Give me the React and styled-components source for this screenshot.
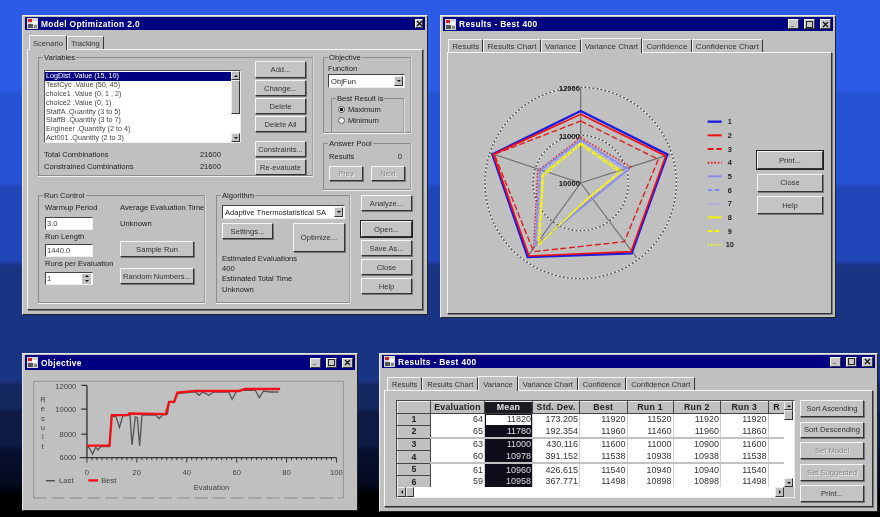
import styled, { createGlobalStyle } from "styled-components";

const GlobalStyle = createGlobalStyle`
  html, body { margin: 0; padding: 0; background: #000; }
  body { font-family: "Liberation Sans", Arial, sans-serif; font-size: 7.6px; color: #1c1c1c; }
`;

const Desktop = styled.div`
  position: relative;
  width: 880px;
  height: 517px;
  overflow: hidden;
  filter: blur(0.55px);
  background: linear-gradient(
    #2c5be6 0, #2c5be6 90px,
    #2652d6 94px, #2652d6 183px,
    #2146ba 187px, #2146ba 260px,
    #1a3484 266px, #1a3484 380px,
    #14275f 386px, #14275f 408px,
    #0d1b45 412px, #0d1b45 445px,
    #071030 450px, #050a20 485px,
    #000 495px
  );
`;

const Win = styled.div`
  position: absolute;
  left: ${(p) => p.$x}px;
  top: ${(p) => p.$y}px;
  width: ${(p) => p.$w}px;
  height: ${(p) => p.$h}px;
  box-sizing: border-box;
  padding: 1px 2px 2px;
  background: #c0c0c0;
  border: 1px solid;
  border-color: #e8e8e8 #222 #222 #e8e8e8;
  display: flex;
  flex-direction: column;
`;

const TitleBar = styled.div`
  height: ${(p) => p.$h || 13}px;
  flex: none;
  background: #000080;
  color: #fff;
  font-weight: 700;
  font-size: 8.4px;
  letter-spacing: 0.35px;
  display: flex;
  align-items: center;
  gap: 3px;
  padding: 0 2px;
`;

const TitleText = styled.span`
  flex: 1;
`;

const WinBtn = styled.span`
  width: ${(p) => (p.$small ? 8 : 11)}px;
  height: ${(p) => (p.$small ? 9 : 10)}px;
  margin-left: ${(p) => (p.$gap ? 2 : -3)}px;
  background: #c8c8c8;
  border: 1px solid;
  border-color: #fff #333 #333 #fff;
  box-sizing: border-box;
  display: grid;
  place-items: center;
  color: #111;
`;

const AppIcon = () => (
  <svg width="11" height="11" viewBox="0 0 11 11">
    <rect width="11" height="11" fill="#d8d8d8" />
    <rect x="1" y="1" width="4" height="3" fill="#c22" />
    <rect x="5" y="3" width="5" height="3" fill="#fff" />
    <rect x="1" y="6" width="5" height="4" fill="#555" />
    <rect x="7" y="7" width="3" height="3" fill="#888" />
  </svg>
);

const Controls = ({ full }) => (
  <>
    {full && (
      <>
        <WinBtn>
          <svg width="7" height="7" viewBox="0 0 7 7"><rect x="1" y="5" width="3" height="1" fill="#777" /></svg>
        </WinBtn>
        <WinBtn $gap>
          <svg width="7" height="7" viewBox="0 0 7 7"><rect x="0.5" y="0.5" width="6" height="6" fill="none" stroke="#222" /></svg>
        </WinBtn>
      </>
    )}
    <WinBtn $gap $small={!full}>
      <svg width="7" height="7" viewBox="0 0 7 7"><path d="M1 1l5 5M6 1l-5 5" stroke="#111" strokeWidth="1.3" /></svg>
    </WinBtn>
  </>
);

const TabRow = styled.div`
  display: flex;
  flex: none;
  height: ${(p) => p.$h || 17}px;
  align-items: flex-end;
  padding-left: ${(p) => p.$pad || 3}px;
  margin-top: ${(p) => p.$top || 2}px;
  position: relative;
  z-index: 1;
`;

const Tab = styled.div`
  box-sizing: border-box;
  height: ${(p) => (p.$on ? 15 : 13)}px;
  padding: 0 ${(p) => p.$pad || 3}px;
  display: flex;
  align-items: center;
  background: #c0c0c0;
  color: #333;
  font-size: ${(p) => p.$size || 7.6}px;
  border-top: 1px solid #f4f4f4;
  border-left: 1px solid #f4f4f4;
  border-right: 1px solid #333;
  margin-bottom: ${(p) => (p.$on ? -1 : 0)}px;
`;

const TabPanel = styled.div`
  flex: 1;
  min-height: 0;
  box-sizing: border-box;
  border: 1px solid;
  border-color: #f4f4f4 #333 #333 #f4f4f4;
  box-shadow: 1px 1px 0 #777;
  margin: 0 2px 2px;
`;

const ScenarioPanel = styled(TabPanel)`
  padding: 7px 10px 6px 10px;
  display: flex;
  flex-direction: column;
  gap: 4px;
`;

const TopRow = styled.div`
  display: grid;
  grid-template-columns: 275px 88px;
  gap: 10px;
  height: 134px;
`;

const BottomRow = styled.div`
  flex: 1;
  display: grid;
  grid-template-columns: 167px 134px 51px;
  gap: 11px;
  height: 108px;
`;

const Group = styled.div`
  position: relative;
  box-sizing: border-box;
  border: 1px solid #8c8c8c;
  border-right-color: #a0a0a0;
  box-shadow: 0 1px 0 #f2f2f2, 1px 0 0 #dcdcdc;
  padding: ${(p) => p.$pad || "0"};
  height: ${(p) => (p.$h ? `${p.$h}px` : "auto")};
`;

const BestGroup = styled(Group)`
  margin: 10px 0 0 3px;
  width: 73px;
  height: 35px;
`;

const GroupTitle = styled.span`
  position: absolute;
  top: -5px;
  left: 4px;
  padding: 0 1px;
  background: #c0c0c0;
  line-height: 9px;
  white-space: pre-line;
`;

const VarGrid = styled.div`
  display: grid;
  grid-template-columns: 197px 51px;
  gap: 14px;
`;

const VarLeft = styled.div`
  display: flex;
  flex-direction: column;
`;

const Stack = styled.div`
  display: flex;
  flex-direction: column;
  gap: ${(p) => p.$gap ?? 2}px;
  margin-top: ${(p) => p.$top || 0}px;
`;

const Btn = styled.button`
  box-sizing: border-box;
  flex: none;
  width: ${(p) => (p.$w ? `${p.$w}px` : "100%")};
  height: ${(p) => p.$h || 16}px;
  margin-top: ${(p) => p.$mt || 0}px;
  margin-bottom: ${(p) => p.$mb || 0}px;
  padding: 0;
  font: inherit;
  font-size: ${(p) => p.$size || 7.6}px;
  color: ${(p) => (p.$off ? "#8a8a8a" : "#333")};
  text-shadow: ${(p) => (p.$off ? "1px 1px 0 #eee" : "none")};
  background: #c4c4c4;
  border: 1px solid;
  border-color: #f6f6f6 #333 #333 #f6f6f6;
  box-shadow: ${(p) => (p.$def ? "0 0 0 1px #222" : "1px 1px 0 #777")};
`;

const ListFrame = styled.div`
  display: flex;
  height: 73px;
  background: #fff;
  border: 1px solid;
  border-color: #555 #eee #eee #555;
  box-sizing: border-box;
`;

const ListBody = styled.div`
  flex: 1;
  padding-top: 1px;
  font-size: 7.2px;
  color: #444;
`;

const ListRow = styled.div`
  height: 8.9px;
  line-height: 8.9px;
  padding-left: 1px;
  background: ${(p) => (p.$on ? "#000080" : "transparent")};
  color: ${(p) => (p.$on ? "#fff" : "inherit")};
`;

const ScrollBar = styled.div`
  display: flex;
  flex: none;
  flex-direction: ${(p) => (p.$h ? "row" : "column")};
  ${(p) => (p.$h ? "height: 10px;" : "width: 9px;")}
  background: #fff;
`;

const ScrollBtn = styled.div`
  box-sizing: border-box;
  flex: none;
  ${(p) => (p.$h ? "width: 9px;" : "height: 9px;")}
  background: #c0c0c0;
  border: 1px solid;
  border-color: #eee #333 #333 #eee;
  display: grid;
  place-items: center;
`;

const Thumb = styled(ScrollBtn)`
  ${(p) => (p.$h ? `width: ${p.$size}px;` : `height: ${p.$size}px;`)}
`;

const ScrollGap = styled.div`
  flex: 1;
`;

const Arrow = styled.span`
  width: 0;
  height: 0;
  border: 2.5px solid transparent;
  ${(p) => `border-${p.$side}: none; border-${{ top: "bottom", bottom: "top", left: "right", right: "left" }[p.$side]}-color: #111;`}
`;

const StatRow = styled.div`
  display: flex;
  justify-content: space-between;
  padding-right: 20px;
  height: 12px;
  align-items: center;
  margin-top: ${(p) => p.$top || 0}px;
`;

const Combo = styled.div`
  box-sizing: border-box;
  display: flex;
  align-items: center;
  justify-content: space-between;
  height: ${(p) => p.$h || 14}px;
  background: #fff;
  border: 1px solid;
  border-color: #444 #eee #eee #444;
  padding: 0 1px 0 2px;
`;

const ComboBtn = styled.span`
  box-sizing: border-box;
  width: 9px;
  height: 10px;
  background: #c0c0c0;
  border: 1px solid;
  border-color: #eee #333 #333 #eee;
  display: grid;
  place-items: center;
`;

const ObjectiveLabel = styled.div`
  line-height: 10px;
  padding-top: 4px;
`;

const RadioRow = styled.label`
  display: flex;
  align-items: center;
  gap: 3px;
  height: 11px;
`;

const RadioDot = styled.span`
  box-sizing: border-box;
  width: 7px;
  height: 7px;
  border-radius: 50%;
  background: ${(p) => (p.$on ? "radial-gradient(circle, #111 0 1.5px, #fff 2px)" : "#fff")};
  border: 1px solid #555;
`;

const RightCol = styled.div`
  display: flex;
  flex-direction: column;
  gap: 10px;
`;

const AnswerRow = styled.div`
  display: flex;
  justify-content: space-between;
  padding-right: 3px;
`;

const ButtonPair = styled.div`
  display: flex;
  justify-content: space-between;
  margin-top: 5px;
`;

const RunGrid = styled.div`
  display: grid;
  grid-template-columns: 75px 78px;
`;

const FieldLabel = styled.div`
  line-height: 10px;
  margin-top: ${(p) => p.$top || 0}px;
  white-space: nowrap;
`;

const Input = styled.div`
  box-sizing: border-box;
  width: 48px;
  height: 13px;
  margin-top: ${(p) => p.$top || 0}px;
  padding: 0 1px;
  display: flex;
  align-items: center;
  justify-content: space-between;
  background: #fff;
  border: 1px solid;
  border-color: #444 #eee #eee #444;
  color: #444;
`;

const Spinner = styled.span`
  display: flex;
  flex-direction: column;
  width: 9px;
  height: 10px;
  background: #c0c0c0;
  align-items: center;
  justify-content: space-around;
`;

const AlgoRow = styled.div`
  display: flex;
  justify-content: space-between;
  align-items: flex-start;
  margin-top: 4px;
`;

const EstBlock = styled.div`
  line-height: 10.2px;
  margin-top: 2px;
`;

const SideButtons = styled.div`
  display: flex;
  flex-direction: column;
  gap: 3px;
`;

/* results window */
const ChartPanel = styled(TabPanel)`
  display: flex;
  margin: 0 1px 1px 4px;
`;

const ChartButtons = styled.div`
  padding: 98px 0 0 6px;
  width: 66px;
  display: flex;
  flex-direction: column;
  gap: 4.5px;
`;

const ObjectiveBody = styled.div`
  flex: 1;
  min-height: 0;
  display: flex;
  svg { display: block; }
`;

const TablePanel = styled(TabPanel)`
  padding: 9px 0 0 11px;
  display: flex;
  gap: 5px;
  overflow: hidden;
`;

const TableFrame = styled.div`
  box-sizing: border-box;
  width: 399px;
  height: 98px;
  display: grid;
  grid-template-columns: 1fr 10px;
  grid-template-rows: 1fr 10px;
  background: #fff;
  border: 1px solid;
  border-color: #444 #eee #eee #444;
`;

const TableClip = styled.div`
  overflow: hidden;
`;

const Sheet = styled.table`
  border-collapse: collapse;
  table-layout: fixed;
  width: 388px;
  font-size: 9px;
  line-height: 1;
  color: #333;
`;

const Head = styled.th`
  box-sizing: border-box;
  height: 11.5px;
  padding: 0;
  font-size: 8.8px;
  letter-spacing: 0.2px;
  overflow: hidden;
  white-space: nowrap;
  background: ${(p) => (p.$on ? "#1b1b22" : "#c0c0c0")};
  color: ${(p) => (p.$on ? "#e8e8e8" : "#222")};
  border: 1px solid;
  border-color: #eee #444 #444 #eee;
`;

const RowHead = styled(Head)`
  height: 12.6px;
`;

const Row = styled.tr`
  &:nth-child(even) td {
    border-bottom: 2px solid #c0c0c0;
  }
`;

const Cell = styled.td`
  padding: 0 1px 0 0;
  height: 12.6px;
  box-sizing: border-box;
  text-align: right;
  border-right: 1px solid #d0d0d0;
  background: ${(p) => (p.$sel ? "#0d0d1a" : "#fff")};
  color: ${(p) => (p.$sel ? "#ddd" : "inherit")};
  ${(p) => p.$active && "background: #fff; color: #333; box-shadow: inset 0 0 0 1px #111;"}
`;

const Corner = styled.div`
  background: #c0c0c0;
`;

const SortButtons = styled.div`
  display: flex;
  flex-direction: column;
  gap: 4.5px;
  width: 64px;
  flex: none;
`;

const radar = {
  ring: [287, 143],
  axes: [[437, 262], [705, 460], [605, 770], [275, 770], [165, 456]],
  series: [
    { c: "#1c1ce0", w: 7, d: "", p: "437,330 697,460 590,757 278,768 172,460" },
    { c: "#f01010", w: 5, d: "", p: "437,340 692,465 588,752 282,765 175,460" },
    { c: "#e01818", w: 4, d: "18 8", p: "437,360 670,475 568,722 296,752 178,460" },
    { c: "#e02020", w: 4, d: "5 5", p: "437,410 588,498 445,612 296,738 308,510" },
    { c: "#8a8aee", w: 4, d: "", p: "437,416 582,505 448,614 300,735 314,508" },
    { c: "#8a8aee", w: 4, d: "14 7", p: "437,418 578,506 450,610 302,732 316,510" },
    { c: "#a0a0f0", w: 4, d: "5 5", p: "437,420 574,508 452,606 304,730 318,514" },
    { c: "#f0f010", w: 3, d: "", p: "437,426 560,510 452,600 310,732 322,520" },
    { c: "#f8f800", w: 4, d: "14 7", p: "437,428 556,512 452,598 312,730 324,522" },
    { c: "#f4f420", w: 4, d: "5 5", p: "437,432 552,514 452,596 314,728 326,526" },
  ],
};

const Radar = () => (
  <svg width="303" height="261" viewBox="39 156 909 783">
    {radar.ring.map((r) => (
      <g key={r} fill="none" strokeWidth="4">
        <circle cx="437" cy="546" r={r} stroke="#f4f4f4" strokeDasharray="6 6" />
        <circle cx="437" cy="546" r={r} stroke="#555" strokeDasharray="6 6" strokeDashoffset="6" />
      </g>
    ))}
    {radar.axes.map(([x, y]) => (
      <line key={x} x1="437" y1="546" x2={x} y2={y} stroke="#707070" strokeWidth="3.5" />
    ))}
    {radar.series.map((s) => (
      <polygon key={s.c + s.p} points={s.p} fill="none" stroke={s.c} strokeWidth={s.w} strokeDasharray={s.d} />
    ))}
    <g fontFamily="Liberation Sans" fontWeight="700" fontSize="23" fill="#111" textAnchor="middle">
      <text x="403" y="270">12000</text>
      <text x="403" y="413">11000</text>
      <text x="403" y="554">10000</text>
    </g>
    {radar.series.map((s, i) => {
      const y = 362 + i * 41;
      return (
        <g key={y}>
          <line x1="818" x2="860" y1={y} y2={y} stroke={s.c} strokeWidth={Math.max(s.w, 6)} strokeDasharray={s.d} />
          <text x={i === 9 ? 872 : 878} y={y + 8} fontFamily="Liberation Sans" fontWeight="700" fontSize="22" fill="#222">{i + 1}</text>
        </g>
      );
    })}
  </svg>
);

const lastLine = "262,318 270,325 279,343 288,322 296,330 303,320 330,320 336,228 350,230 360,262 370,228 385,225 392,225 398,315 408,230 414,232 421,318 428,225 470,225 480,235 490,225 505,222 510,186 525,186 535,160 590,155 600,165 612,155 630,165 645,155 690,155 700,178 712,155 730,150 770,150 782,172 795,152 815,155 840,155";
const bestLine = "262,317 330,317 337,225 385,225 390,220 500,222 510,185 525,185 535,157 590,152 720,152 740,146 845,146";

const ObjectiveChart = () => (
  <svg width="332" height="142" viewBox="75 90 996 426">
    <path d="M101 475V123H1036V475" fill="none" stroke="#8c8c8c" strokeWidth="2.5" />
    <line x1="101" x2="1036" y1="475" y2="475" stroke="#8c8c8c" strokeWidth="3" strokeDasharray="40 14" />
    <g stroke="#333" strokeWidth="4" fill="none">
      <path d="M262 135V353H1015" />
      <path d="M245 135H262M245 207H262M245 282H262M240 353H262" />
      {Array.from({ length: 51 }, (_, i) => {
        const x = 262 + i * 15.06;
        return <line key={x} x1={x} x2={x} y1={353} y2={i % 10 === 0 ? 368 : 361} strokeWidth="3" />;
      })}
    </g>
    <polyline points={lastLine} fill="none" stroke="#555" strokeWidth="4" />
    <polyline points={bestLine} fill="none" stroke="#f01018" strokeWidth="7" />
    <g fontFamily="Liberation Sans" fontSize="23" fill="#444">
      <g textAnchor="end">
        <text x="230" y="146">12000</text>
        <text x="230" y="215">10000</text>
        <text x="230" y="290">8000</text>
        <text x="230" y="360">6000</text>
      </g>
      <g textAnchor="middle">
        {[0, 20, 40, 60, 80, 100].map((v, i) => (
          <text key={v} x={262 + i * 150.6} y="407">{v}</text>
        ))}
        {"Result".split("").map((c, i) => (
          <text key={i} x="129" y={186 + i * 28}>{c}</text>
        ))}
        <text x="638" y="452">Evaluation</text>
      </g>
      <line x1="138" x2="165" y1="423" y2="423" stroke="#444" strokeWidth="4" />
      <text x="178" y="431">Last</text>
      <line x1="266" x2="296" y1="422" y2="422" stroke="#f01018" strokeWidth="7" />
      <text x="305" y="431">Best</text>
    </g>
  </svg>
);

const vars = [
  "LogDist .Value (15, 10)",
  "TestCyc .Value (50, 45)",
  "choice1 .Value (0, 1 , 2)",
  "choice2 .Value (0, 1)",
  "StaffA .Quantity (3 to 5)",
  "StaffB .Quantity (3 to 7)",
  "Engineer .Quantity (2 to 4)",
  "Act001 .Quantity (2 to 3)",
];

const chartTabs = ["Results", "Results Chart", "Variance", "Variance Chart", "Confidence", "Confidence Chart"];

const columns = [
  ["", 33], ["Evaluation", 54], ["Mean", 48], ["Std. Dev.", 47], ["Best", 47.5],
  ["Run 1", 46], ["Run 2", 47.5], ["Run 3", 47.5], ["R", 17],
];

const rows = [
  [64, 11820, "173.205", 11920, 11520, 11920, 11920],
  [65, 11780, "192.354", 11960, 11460, 11960, 11860],
  [63, 11000, "430.116", 11600, 11000, 10900, 11600],
  [60, 10978, "391.152", 11538, 10938, 10938, 11538],
  [61, 10960, "426.615", 11540, 10940, 10940, 11540],
  [59, 10958, "367.771", 11498, 10898, 10898, 11498],
];

export default function App() {
  return (
    <Desktop>
      <GlobalStyle />

      <Win $x={22} $y={15} $w={406} $h={300}>
        <TitleBar>
          <AppIcon />
          <TitleText>Model Optimization 2.0</TitleText>
          <Controls />
        </TitleBar>
        <TabRow $pad={4}>
          <Tab $on>Scenario</Tab>
          <Tab>Tracking</Tab>
        </TabRow>
        <ScenarioPanel>
          <TopRow>
            <Group $h={119} $pad="12px 8px 0 5px">
              <GroupTitle>Variables</GroupTitle>
              <VarGrid>
                <VarLeft>
                  <ListFrame>
                    <ListBody>
                      {vars.map((v, i) => (
                        <ListRow key={v} $on={i === 0}>{v}</ListRow>
                      ))}
                    </ListBody>
                    <ScrollBar>
                      <ScrollBtn><Arrow $side="top" /></ScrollBtn>
                      <Thumb $size={34} />
                      <ScrollGap />
                      <ScrollBtn><Arrow $side="bottom" /></ScrollBtn>
                    </ScrollBar>
                  </ListFrame>
                  <StatRow $top={5}><span>Total Combinations</span><span>21600</span></StatRow>
                  <StatRow><span>Constrained Combinations</span><span>21600</span></StatRow>
                </VarLeft>
                <Stack $gap={2} $top={-9}>
                  <Btn $h={17}>Add...</Btn>
                  <Btn>Change...</Btn>
                  <Btn>Delete</Btn>
                  <Btn>Delete All</Btn>
                  <Btn $mt={7}>Constraints...</Btn>
                  <Btn>Re-evaluate</Btn>
                </Stack>
              </VarGrid>
            </Group>
            <RightCol>
              <Group $h={76} $pad="2px 5px 0 4px">
                <GroupTitle>Objective</GroupTitle>
                <ObjectiveLabel>Function</ObjectiveLabel>
                <Combo>
                  ObjFun
                  <ComboBtn><Arrow $side="bottom" /></ComboBtn>
                </Combo>
                <BestGroup $pad="5px 0 0 6px">
                  <GroupTitle>Best Result is</GroupTitle>
                  <RadioRow><RadioDot $on />Maximum</RadioRow>
                  <RadioRow><RadioDot />Minimum</RadioRow>
                </BestGroup>
              </Group>
              <Group $h={47} $pad="8px 5px 0 5px">
                <GroupTitle>Answer Pool</GroupTitle>
                <AnswerRow><span>Results</span><span>0</span></AnswerRow>
                <ButtonPair>
                  <Btn $w={34} $h={15} $off>Prev</Btn>
                  <Btn $w={34} $h={15} $off>Next</Btn>
                </ButtonPair>
              </Group>
            </RightCol>
          </TopRow>
          <BottomRow>
            <Group $pad="7px 0 0 6px">
              <GroupTitle>Run Control</GroupTitle>
              <RunGrid>
                <div>
                  <FieldLabel>Warmup Period</FieldLabel>
                  <Input $top={4}>3.0</Input>
                  <FieldLabel $top={2}>Run Length</FieldLabel>
                  <Input $top={2}>1440.0</Input>
                  <FieldLabel $top={2}>Runs per Evaluation</FieldLabel>
                  <Input $top={3}>
                    1
                    <Spinner><Arrow $side="top" /><Arrow $side="bottom" /></Spinner>
                  </Input>
                </div>
                <div>
                  <FieldLabel>Average Evaluation Time</FieldLabel>
                  <FieldLabel $top={6}>Unknown</FieldLabel>
                  <Stack $gap={11} $top={12}>
                    <Btn $w={74}>Sample Run</Btn>
                    <Btn $w={74}>Random Numbers...</Btn>
                  </Stack>
                </div>
              </RunGrid>
            </Group>
            <Group $pad="9px 4px 0 5px">
              <GroupTitle>Algorithm</GroupTitle>
              <Combo>
                Adaptive Thermostatistical SA
                <ComboBtn><Arrow $side="bottom" /></ComboBtn>
              </Combo>
              <AlgoRow>
                <Btn $w={51}>Settings...</Btn>
                <Btn $w={52} $h={29}>Optimize...</Btn>
              </AlgoRow>
              <EstBlock>
                Estimated Evaluations<br />400<br />Estimated Total Time<br />Unknown
              </EstBlock>
            </Group>
            <SideButtons>
              <Btn $mb={7}>Analyze...</Btn>
              <Btn $def>Open...</Btn>
              <Btn>Save As...</Btn>
              <Btn>Close</Btn>
              <Btn>Help</Btn>
            </SideButtons>
          </BottomRow>
        </ScenarioPanel>
      </Win>

      <Win $x={440} $y={15} $w={396} $h={303}>
        <TitleBar $h={14}>
          <AppIcon />
          <TitleText>Results - Best 400</TitleText>
          <Controls full />
        </TitleBar>
        <TabRow $pad={5} $h={20} $top={1}>
          {chartTabs.map((t) => (
            <Tab key={t} $on={t === "Variance Chart"} $size={8.1} $pad={3.2}>{t}</Tab>
          ))}
        </TabRow>
        <ChartPanel>
          <Radar />
          <ChartButtons>
            <Btn $h={18} $def>Print...</Btn>
            <Btn $h={18}>Close</Btn>
            <Btn $h={18}>Help</Btn>
          </ChartButtons>
        </ChartPanel>
      </Win>

      <Win $x={22} $y={353} $w={336} $h={158}>
        <TitleBar $h={15}>
          <AppIcon />
          <TitleText>Objective</TitleText>
          <Controls full />
        </TitleBar>
        <ObjectiveBody>
          <ObjectiveChart />
        </ObjectiveBody>
      </Win>

      <Win $x={379} $y={353} $w={499} $h={159}>
        <TitleBar>
          <AppIcon />
          <TitleText>Results - Best 400</TitleText>
          <Controls full />
        </TitleBar>
        <TabRow $pad={5} $top={5} $h={17}>
          {chartTabs.map((t) => (
            <Tab key={t} $on={t === "Variance"} $pad={4}>{t}</Tab>
          ))}
        </TabRow>
        <TablePanel>
          <TableFrame>
            <TableClip>
              <Sheet>
                <colgroup>
                  {columns.map(([n, w]) => (
                    <col key={n} width={w} />
                  ))}
                </colgroup>
                <thead>
                  <tr>
                    {columns.map(([n]) => (
                      <Head key={n} $on={n === "Mean"}>{n}</Head>
                    ))}
                  </tr>
                </thead>
                <tbody>
                  {rows.map((r, i) => (
                    <Row key={r[0]}>
                      <RowHead>{i + 1}</RowHead>
                      {r.map((v, j) => (
                        <Cell key={j} $sel={j === 1} $active={j === 1 && i === 0}>{v}</Cell>
                      ))}
                      <Cell />
                    </Row>
                  ))}
                </tbody>
              </Sheet>
            </TableClip>
            <ScrollBar>
              <ScrollBtn><Arrow $side="top" /></ScrollBtn>
              <Thumb $size={10} />
              <ScrollGap />
              <ScrollBtn><Arrow $side="bottom" /></ScrollBtn>
            </ScrollBar>
            <ScrollBar $h>
              <ScrollBtn $h><Arrow $side="left" /></ScrollBtn>
              <Thumb $h $size={8} />
              <ScrollGap />
              <ScrollBtn $h><Arrow $side="right" /></ScrollBtn>
            </ScrollBar>
            <Corner />
          </TableFrame>
          <SortButtons>
            <Btn $h={17}>Sort Ascending</Btn>
            <Btn $h={16}>Sort Descending</Btn>
            <Btn $h={17} $off>Set Model</Btn>
            <Btn $h={17} $off>Set Suggested</Btn>
            <Btn $h={17}>Print...</Btn>
            <Btn $h={17} />
          </SortButtons>
        </TablePanel>
      </Win>
    </Desktop>
  );
}
